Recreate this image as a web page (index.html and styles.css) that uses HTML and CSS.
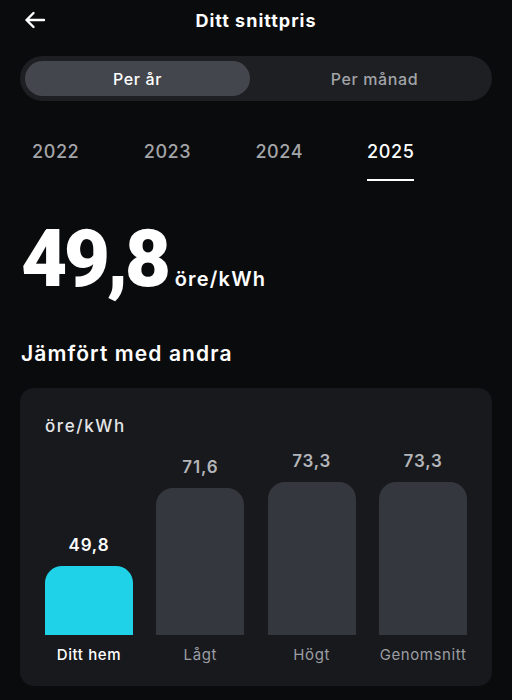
FILE: index.html
```html
<!DOCTYPE html>
<html lang="sv">
<head>
<meta charset="utf-8">
<title>Ditt snittpris</title>
<link rel="stylesheet" href="styles.css">
</head>
<body>
<div class="screen">
  <header class="topbar">
    <svg class="back" width="22" height="18" viewBox="0 0 22 18" fill="none" stroke="#ffffff" stroke-width="2.4" stroke-linecap="round" stroke-linejoin="round">
      <path d="M20 9H2.5M9.5 2L2.5 9l7 7"/>
    </svg>
    <h1 class="title">Ditt snittpris</h1>
  </header>

  <div class="segment">
    <div class="seg-item active">Per år</div>
    <div class="seg-item rest">Per månad</div>
  </div>

  <nav class="years">
    <span class="year">2022</span>
    <span class="year">2023</span>
    <span class="year">2024</span>
    <span class="year active">2025</span>
  </nav>

  <div class="price">
    <span class="price-num">49,8</span>
    <span class="price-unit">öre/kWh</span>
  </div>

  <h2 class="section">Jämfört med andra</h2>

  <div class="card">
    <div class="card-unit">öre/kWh</div>
    <div class="chart">
      <div class="col">
        <div class="val val-own">49,8</div>
        <div class="bar bar-own" style="height:69px"></div>
        <div class="lbl lbl-own">Ditt hem</div>
      </div>
      <div class="col">
        <div class="val">71,6</div>
        <div class="bar" style="height:147px"></div>
        <div class="lbl">Lågt</div>
      </div>
      <div class="col">
        <div class="val">73,3</div>
        <div class="bar" style="height:153px"></div>
        <div class="lbl">Högt</div>
      </div>
      <div class="col">
        <div class="val">73,3</div>
        <div class="bar" style="height:153px"></div>
        <div class="lbl">Genomsnitt</div>
      </div>
    </div>
  </div>
</div>
</body>
</html>
```
FILE: styles.css
```css
* { box-sizing: border-box; }
html, body {
  margin: 0;
  padding: 0;
  background: #0a0b0d;
}
body {
  font-family: Inter, "Noto Sans", sans-serif;
  color: #ffffff;
  width: 512px;
  height: 700px;
  overflow: hidden;
}
.screen {
  padding: 0 20px;
}
.topbar {
  position: relative;
  height: 40px;
  display: flex;
  align-items: center;
  justify-content: center;
}
.back {
  position: absolute;
  left: 4px;
  top: 11px;
}
.title {
  margin: 0;
  font-size: 18px;
  font-weight: 700;
  letter-spacing: 1px;
}
.segment {
  margin-top: 16px;
  height: 45px;
  border-radius: 23px;
  background: #1d1f23;
  padding: 5px;
  display: flex;
}
.seg-item {
  display: flex;
  align-items: center;
  justify-content: center;
  font-size: 16px;
  font-weight: 500;
  letter-spacing: 0.6px;
  color: #a2a4a8;
  border-radius: 18px;
}
.seg-item.active {
  flex: none;
  width: 225px;
  background: #43464c;
  color: #ffffff;
}
.seg-item.rest {
  flex: 1;
  padding-left: 12px;
}
.years {
  margin-top: 39px;
  padding-left: 12px;
  display: flex;
}
.year {
  width: 111.7px;
  flex: none;
  font-size: 18px;
  line-height: 24px;
  font-weight: 500;
  color: #a3a4a8;
  letter-spacing: 0.6px;
}
.year.active {
  color: #ffffff;
  flex: none;
  width: auto;
  padding-bottom: 15px;
  border-bottom: 2px solid #ffffff;
}
.price {
  margin-top: 38px;
  padding-left: 1px;
  display: flex;
  align-items: baseline;
  gap: 7px;
}
.price-num {
  font-family: Roboto, Inter, sans-serif;
  font-size: 80px;
  line-height: 80px;
  font-weight: 900;
  letter-spacing: -3.5px;
}
.price-unit {
  font-size: 20px;
  font-weight: 600;
  letter-spacing: 1.2px;
}
.section {
  margin: 41px 0 0 1px;
  font-size: 21px;
  font-weight: 600;
  line-height: 28px;
  letter-spacing: 1.1px;
}
.card {
  margin-top: 20px;
  background: #17191d;
  border-radius: 14px;
  padding: 26px 25px 0;
  height: 298px;
}
.card-unit {
  font-size: 17px;
  font-weight: 500;
  color: #e4e5e7;
  line-height: 24px;
  letter-spacing: 1.6px;
}
.chart {
  display: grid;
  grid-template-columns: repeat(4, 1fr);
  column-gap: 23.5px;
  align-items: end;
  height: 227px;
}
.col {
  display: flex;
  flex-direction: column;
  align-items: stretch;
}
.val {
  text-align: center;
  font-size: 17px;
  line-height: 22px;
  font-weight: 600;
  letter-spacing: 0.8px;
  color: #b4b5b9;
  margin-bottom: 10px;
}
.val-own {
  color: #ffffff;
}
.bar {
  background: #35373e;
  border-radius: 17px 17px 0 0;
}
.bar-own {
  background: #1fd2e8;
}
.lbl {
  margin-top: 10px;
  text-align: center;
  font-size: 15px;
  line-height: 20px;
  letter-spacing: 0.6px;
  color: #9c9ea3;
}
.lbl-own {
  color: #ffffff;
  font-weight: 500;
}
```
